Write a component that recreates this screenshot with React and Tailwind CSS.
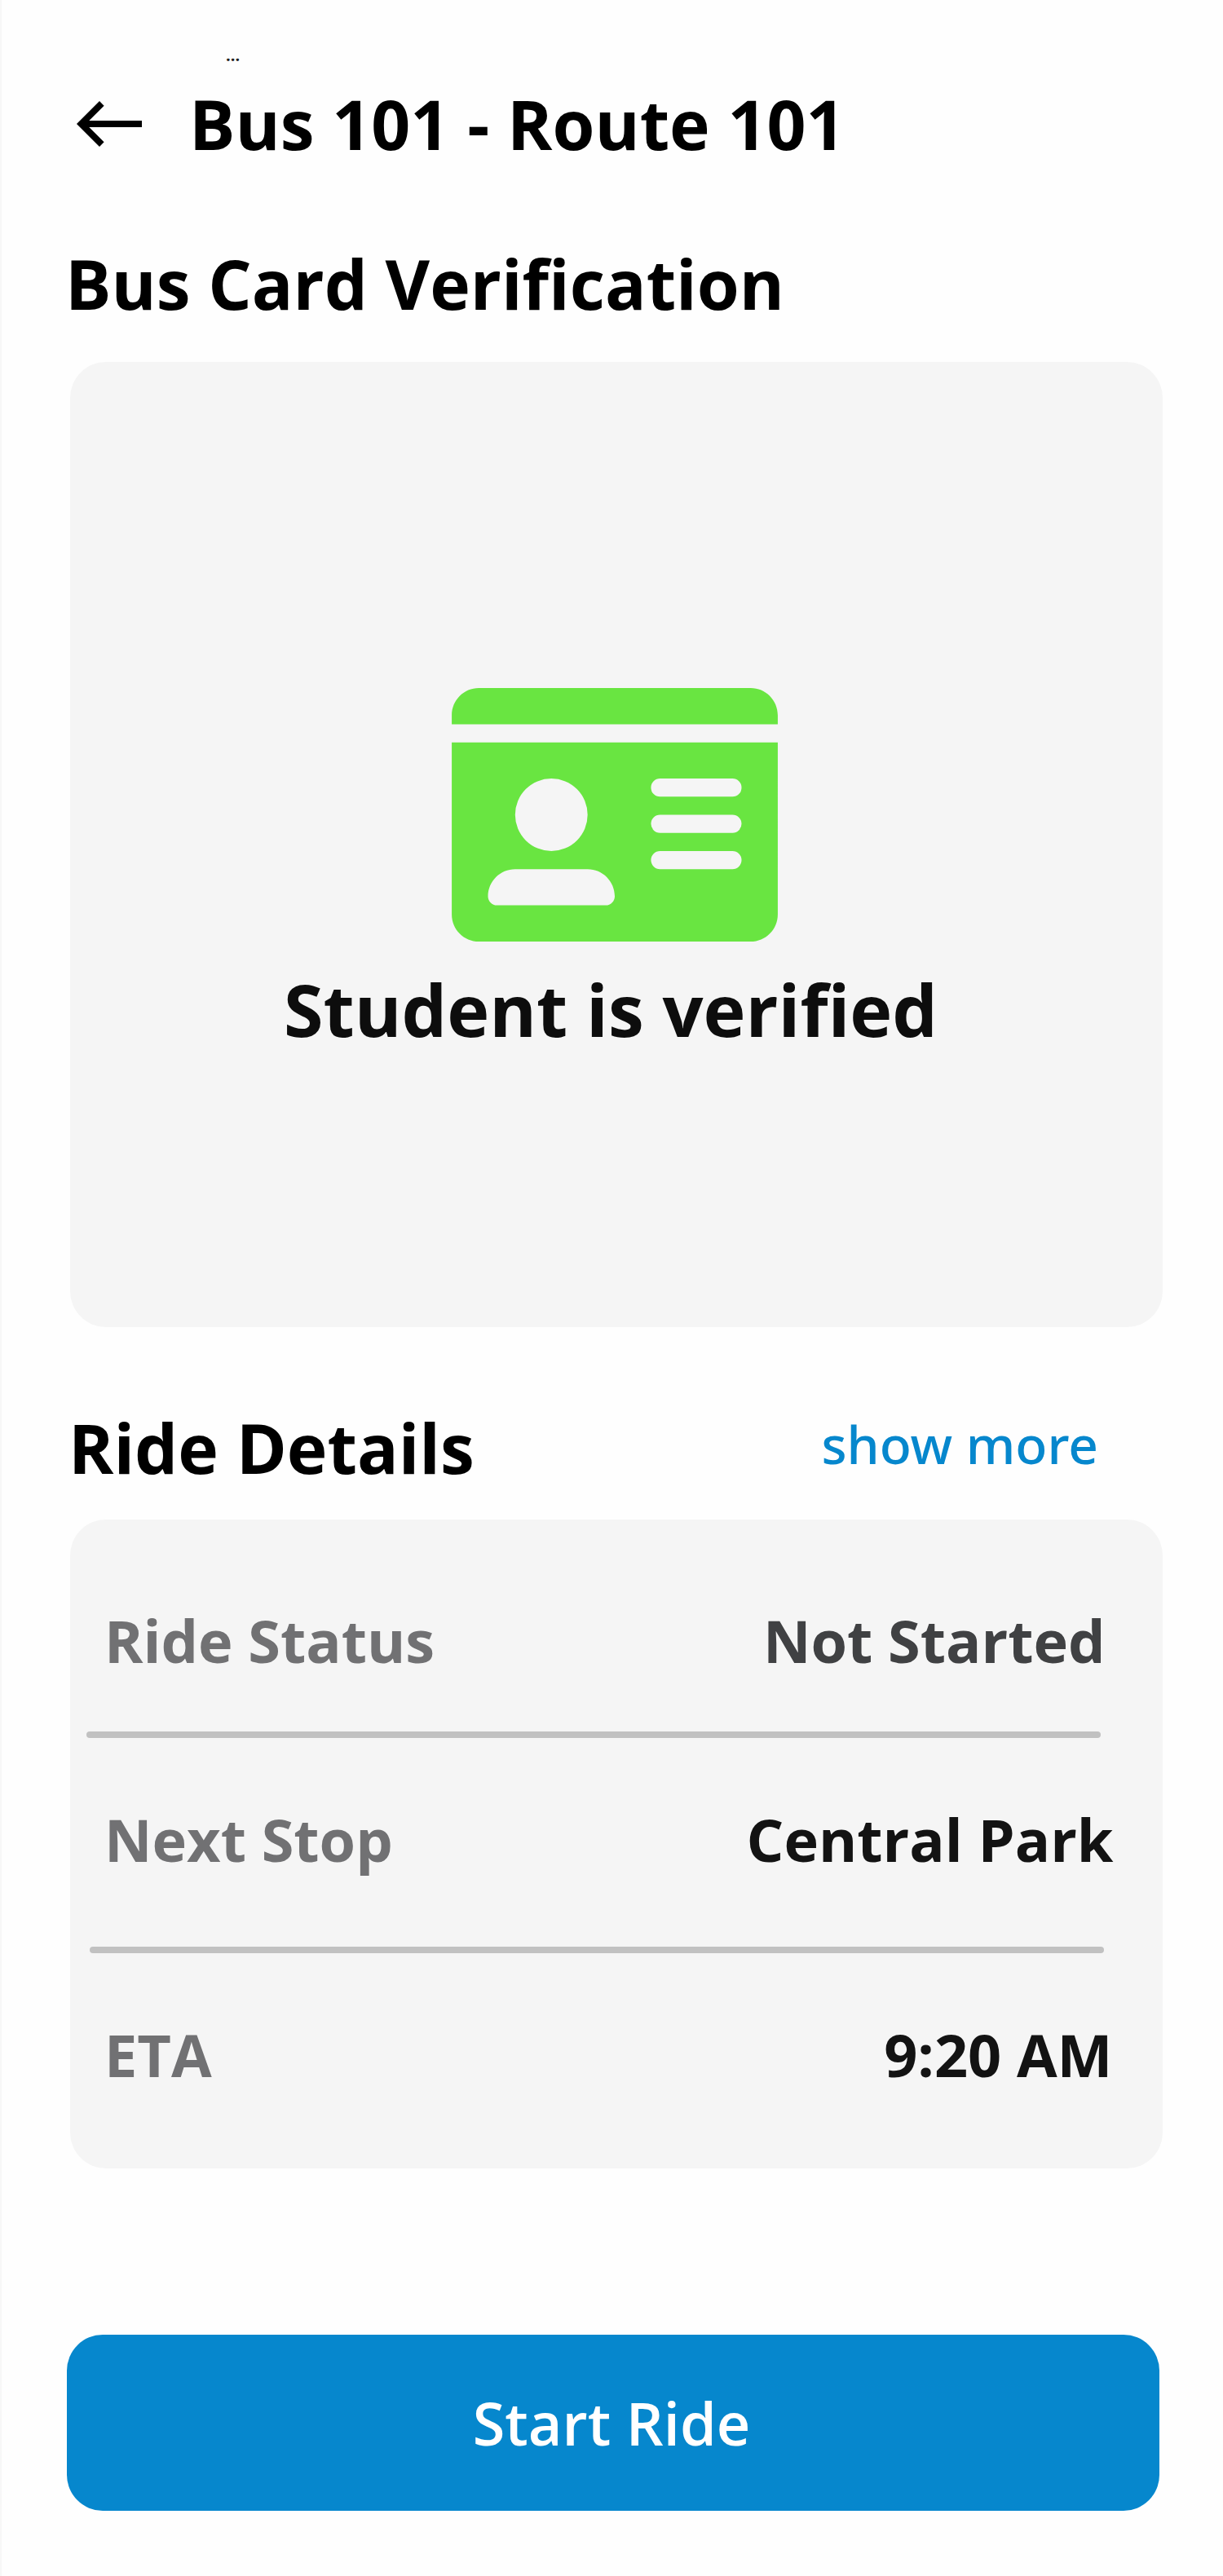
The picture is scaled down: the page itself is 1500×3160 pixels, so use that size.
import React from "react";

function ArrowLeft() {
  return (
    <svg className="mt-[32px] h-[56px] w-[80px] shrink-0" viewBox="0 0 80 56" fill="#000">
      <path d="M0 28 28 0l5.6 5.7L15.3 24H80v8H15.3l18.3 18.3L28 56Z" />
    </svg>
  );
}

function IdCard() {
  return (
    <svg className="mr-[4px] h-[311px] w-[400px] shrink-0" viewBox="0 32 576 448" fill="#69e541">
      <path
        fillRule="evenodd"
        d="M528 32H48C21.5 32 0 53.5 0 80v16h576V80c0-26.5-21.5-48-48-48ZM0 432c0 26.5 21.5 48 48 48h480c26.5 0 48-21.5 48-48V128H0v304ZM176 192a64 64 0 1 1 0 128 64 64 0 1 1 0-128ZM112 352h128c26.5 0 48 21.5 48 48 0 8.8-7.2 16-16 16H80c-8.8 0-16-7.2-16-16 0-26.5 21.5-48 48-48ZM368 192h128a16 16 0 0 1 0 32H368a16 16 0 0 1 0-32ZM368 256h128a16 16 0 0 1 0 32H368a16 16 0 0 1 0-32ZM368 320h128a16 16 0 0 1 0 32H368a16 16 0 0 1 0-32Z"
      />
    </svg>
  );
}

function DetailRow({ label, value, className }) {
  return (
    <div className={`flex justify-between pl-[42px] text-[72px] leading-[100px] font-bold whitespace-nowrap ${className}`}>
      <span className="text-[#717173]">{label}</span>
      <span>{value}</span>
    </div>
  );
}

export default function App() {
  return (
    <main className="flex h-[3160px] w-[1500px] flex-col border-l-2 border-[#f7f7f7] bg-[#fefefe] pt-[58px] font-['Open_Sans','Noto_Sans',sans-serif] text-black">
      <div className="ml-[275px] h-[20px] text-[20px] leading-[20px] font-bold text-[#222]">...</div>

      <header className="mt-[14px] flex gap-[58px] pl-[92px]">
        <ArrowLeft />
        <h1 className="text-[84px] leading-[120px] font-bold">Bus 101 - Route 101</h1>
      </header>

      <h2 className="mt-[76px] pl-[78px] text-[84px] leading-[120px] font-bold">Bus Card Verification</h2>

      <section className="mt-[36px] ml-[84px] flex h-[1184px] w-[1340px] flex-col items-center rounded-[44px] bg-[#f5f5f5] pt-[400px]">
        <IdCard />
        <p className="mt-[23px] mr-[14px] text-[88px] leading-[120px] font-bold text-[#0d0d0d]">Student is verified</p>
      </section>

      <div className="mt-[88px] flex justify-between pr-[153px] pl-[82px]">
        <h2 className="text-[84px] leading-[120px] font-bold">Ride Details</h2>
        <a className="mt-[12px] font-['Noto_Sans'] text-[64px] leading-[88px] font-medium text-[#0687cd]">show more</a>
      </div>

      <section className="mt-[28px] ml-[84px] flex h-[796px] w-[1340px] flex-col rounded-[44px] bg-[#f5f5f5] pt-[98px]">
        <DetailRow label="Ride Status" value="Not Started" className="pr-[70.5px] text-[#404143]" />
        <div className="mt-[62px] ml-[20px] h-[8px] w-[1244px] rounded-full bg-[#c1c1c1]" />
        <DetailRow label="Next Stop" value="Central Park" className="mt-[74px] pr-[60.5px] text-[#131313]" />
        <div className="mt-[82px] ml-[24px] h-[8px] w-[1244px] rounded-full bg-[#c1c1c1]" />
        <DetailRow label="ETA" value="9:20 AM" className="mt-[74px] pr-[61.5px] text-[#131313]" />
      </section>

      <button className="mt-[204px] ml-[80px] flex h-[216px] w-[1340px] items-center justify-center rounded-[44px] bg-[#0687cd] pr-[4px] text-[72px] leading-[100px] font-semibold text-white">
        Start Ride
      </button>
    </main>
  );
}
